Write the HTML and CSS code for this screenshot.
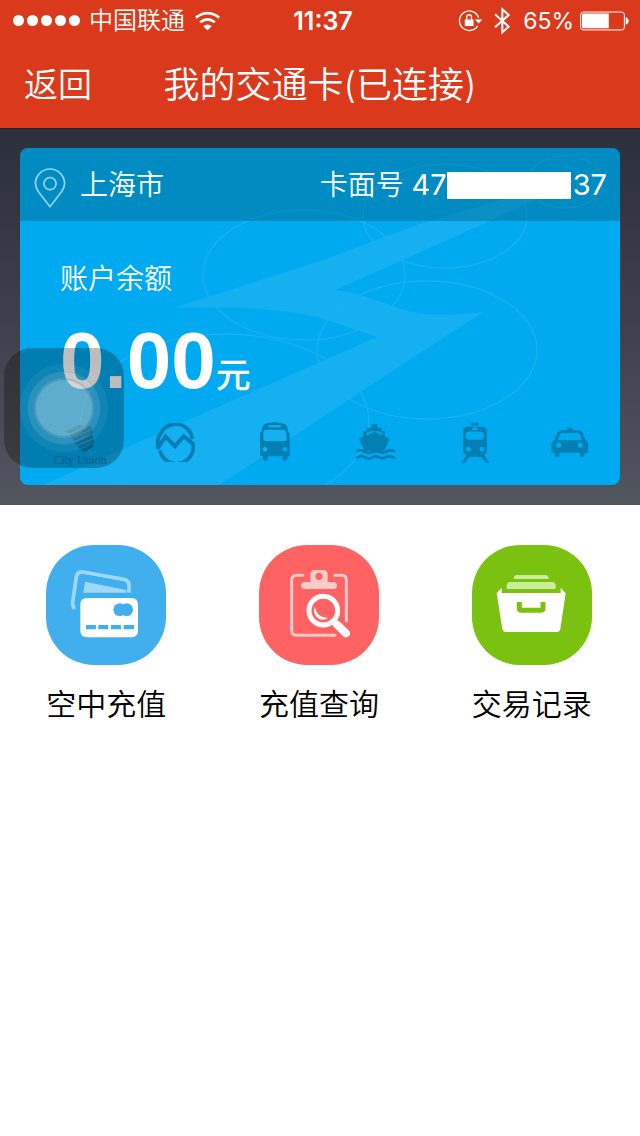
FILE: index.html
```html
<!DOCTYPE html>
<html lang="zh-CN">
<head>
<meta charset="utf-8">
<meta name="viewport" content="width=device-width, initial-scale=1">
<title>我的交通卡</title>
<link rel="stylesheet" href="styles.css">
</head>
<body>
<header class="top">
  <div class="status">
    <div class="status-left">
      <span class="signal"><i></i><i></i><i></i><i></i><i></i></span>
      <span>中国联通</span>
      <svg class="wifi" viewBox="580 30 80 60" aria-hidden="true">
        <g fill="none" stroke="#fff" stroke-width="8"><path d="M585 50Q620 23 655 50"/><path d="M598 64Q620 46 642 64"/></g>
        <path fill="#fff" d="M607 76Q620 65 633 76L620 88Z"/>
      </svg>
    </div>
    <time class="clock">11:37</time>
    <div class="status-right">
      <svg class="lock" viewBox="420 26 74 68" aria-hidden="true">
        <g fill="none" stroke="#fff"><path stroke-width="4" d="M478 76A29 29 0 1 1 481 52"/><path stroke-width="4" d="M446 58V50a7 7 0 0 1 14 0V58"/></g>
        <path fill="#fff" d="M440 57h26v19h-26zM470 57h22l-11 12z"/>
      </svg>
      <svg class="bluetooth" viewBox="524 20 54 84" aria-hidden="true"><path fill="none" stroke="#fff" stroke-width="6" d="M530 42L571 79L552 96V27L571 44L530 81"/></svg>
      <span class="percent">65%</span>
      <svg class="battery" viewBox="780 32 148 60" aria-hidden="true">
        <rect x="782" y="35" width="132" height="54" rx="8" fill="none" stroke="#fff" stroke-width="3"/>
        <path fill="#fff" d="M790 39H867V84H790Q786 84 786 80V43Q786 39 790 39ZM918 51Q927 54 927 62T918 73Z"/>
      </svg>
    </div>
  </div>
  <nav class="nav">
    <button class="back" type="button">返回</button>
    <h1 class="title">我的交通卡(已连接)</h1>
  </nav>
</header>
<main>
  <section class="stage">
    <article class="card">
      <svg class="pattern" viewBox="20 148 600 337" preserveAspectRatio="none" aria-hidden="true">
        <path fill="#14b0f2" d="M174 308L320 261L420 224L598 171L538 199L403 260L335 290C370 294 395 310 424 314Q450 316 484 312Q455 330 420 353L219 485H43L200 415L377 337L327 320Q275 304 174 308Z"/>
        <g fill="none" stroke="#19b1f1" stroke-width="1.3">
          <ellipse cx="304" cy="275" rx="101" ry="65"/><ellipse cx="445" cy="216" rx="82" ry="52"/>
          <ellipse cx="565" cy="182" rx="38" ry="26"/><ellipse cx="427" cy="350" rx="110" ry="69"/>
          <ellipse cx="225" cy="422" rx="144" ry="88"/>
        </g>
      </svg>
      <div class="card-head">
        <svg class="pin" viewBox="103 115 94 118" aria-hidden="true"><g fill="none" stroke="#8fd6f5" stroke-width="5"><path d="M150 229L116 185Q107 173 107 161A43 43 0 0 1 193 161Q193 173 184 185Z"/><circle cx="150" cy="161" r="18"/></g></svg>
        <span class="city">上海市</span>
        <span class="number">卡面号 <span class="digits">47<span class="mask"></span>37</span></span>
      </div>
      <div class="balance">
        <p class="balance-label">账户余额</p>
        <p class="amount"><strong>0.00</strong><span>元</span></p>
      </div>
      <div class="transport">
        <div class="union">
          <svg viewBox="186 316 90 86" aria-hidden="true"><path fill="currentColor" d="M187 339L230 318L242 323L201 344ZM201 347L262 321L270 328L207 355ZM208 359L269 331V343L214 367ZM216 371L270 348V358L221 378ZM224 381L272 361V371L230 390ZM233 393L272 374V384L241 401Z"/></svg>
          <span>City Union</span>
        </div>
        <svg class="metro" viewBox="465 311 120 117" aria-hidden="true"><g fill="none" stroke="currentColor"><path stroke-width="11" d="M475 387Q468 360 482 343A50 50 0 0 1 577 359M480 393A50 50 0 0 0 579 372"/><path stroke-width="12" d="M471 389L497 352L525 381L551 351L583 376"/></g></svg>
        <svg class="bus" viewBox="180 311 90 120" aria-hidden="true"><path fill="currentColor" fill-rule="evenodd" d="M184 342Q186 323 194 317Q224 307 255 317Q263 323 265 342L269 343V414H262V423Q254 434 247 423V414H204V423Q196 434 189 423V414H180V343ZM206 321Q204 324 206 327H242Q245 324 242 321ZM197 334Q191 334 190 342V362Q191 369 198 369H252Q259 369 260 362L258 341Q257 334 251 334ZM195 386a7 7 0 1 0 .1 0ZM255 386a7 7 0 1 0 .1 0Z"/></svg>
        <svg class="ship" viewBox="470 308 120 112" aria-hidden="true"><path fill="currentColor" fill-rule="evenodd" d="M517 309H534V319H547V330H557V345L571 353L557 386Q550 391 542 389L528 398L513 389Q502 393 494 386L478 353L491 347V330H501V319H517ZM510 330V334H502V342L526 332L549 342V334H541V330Z"/><g fill="none" stroke="currentColor" stroke-width="8"><path d="M471 390C484 385 490 387 497 392S514 397 523 390Q531 387 539 392C549 397 554 396 563 390Q574 385 588 391"/><path d="M471 411C484 402 490 404 497 409S514 414 523 407Q531 404 539 409C549 414 554 413 563 407Q574 403 588 412"/></g></svg>
        <svg class="tram" viewBox="124 301 86 122" aria-hidden="true"><path fill="currentColor" fill-rule="evenodd" d="M142 315H189Q201 317 201 329V386Q201 395 193 399L208 422H198L185 405H147L136 422H125L140 399Q130 395 130 386V329Q131 317 142 315ZM157 318V325H174V318ZM147 329Q138 331 138 340V346Q140 354 147 354H184Q192 352 192 345V338Q191 330 184 329ZM146 375a7 7 0 1 0 .1 0ZM186 375a7 7 0 1 0 .1 0Z"/><circle cx="158" cy="307" r="5" fill="currentColor"/><circle cx="171" cy="307" r="5" fill="currentColor"/><path fill="none" stroke="currentColor" stroke-width="3" d="M158 307H171"/></svg>
        <svg class="taxi" viewBox="395 314 114 94" aria-hidden="true"><path fill="currentColor" fill-rule="evenodd" d="M442 324Q444 315 451 315T460 324H477Q486 324 489 330L498 351L507 361V392H496V401Q489 411 482 401V392H420V401Q413 411 406 401V392H396V361L406 351L414 331Q417 324 425 324ZM428 332Q423 332 421 337L415 354H489L482 337Q480 332 475 332ZM418 361a8 8 0 1 0 .1 0ZM483 361a8 8 0 1 0 .1 0Z"/></svg>
      </div>
    </article>
    <button class="assist" type="button" aria-label="AssistiveTouch"><span class="ring-outer"><span class="ring-mid"><span class="ring-inner"></span></span></span></button>
  </section>
  <section class="actions">
    <button class="action" type="button">
      <svg class="tile blue" viewBox="48 45 360 360" aria-hidden="true">
        <path fill="none" stroke="#9fd8f7" stroke-width="11" d="M131 238V230Q126 225 129 210L139 141Q142 124 158 126L281 148Q298 151 297 168V188"/>
        <path fill="#9fd8f7" d="M165 155L289 180V188H160Z"/>
        <rect x="151" y="204" width="173" height="118" rx="18" fill="#fff"/>
        <g fill="#41aeee"><circle cx="269" cy="239" r="19"/><circle cx="290" cy="239" r="19"/><path d="M168 285h30v13h-30zM205 285h30v13h-30zM243 285h30v13h-30zM281 285h31v13h-31z"/></g>
      </svg>
      <span>空中充值</span>
    </button>
    <button class="action" type="button">
      <svg class="tile red" viewBox="54 45 360 360" aria-hidden="true">
        <path fill="none" stroke="#ffcaca" stroke-width="9" stroke-linecap="round" d="M186 136H166Q152 137 152 151V301Q152 316 166 316H282M282 136H302Q316 137 316 151V272"/>
        <path fill="#ffcaca" fill-rule="evenodd" d="M208 156V131Q210 121 221 120H247Q258 121 260 131V156H279Q288 158 288 167Q287 177 278 177H190Q181 176 180 167Q181 157 190 156ZM234 128a11 11 0 1 0 .1 0Z"/>
        <circle cx="247" cy="242" r="43" fill="none" stroke="#fff" stroke-width="15"/>
        <path fill="#fff" d="M221 230Q226 262 261 264Q244 275 229 263Q215 249 221 230Z"/>
        <path fill="none" stroke="#fff" stroke-width="24" stroke-linecap="round" d="M288 284L315 310"/><path stroke="#fff" stroke-width="10" d="M274 269L290 285"/>
      </svg>
      <span>充值查询</span>
    </button>
    <button class="action" type="button">
      <svg class="tile green" viewBox="58 45 360 360" aria-hidden="true">
        <path fill="#caed99" d="M183 147V144Q184 135 193 135H278Q287 136 288 144V147ZM162 177V164Q164 156 172 156H299Q308 157 309 164V177Z"/>
        <path fill="#fff" d="M147 173V189H324V173L339 190L323 297Q321 306 312 306H160Q151 306 149 297L132 190Z"/>
        <path fill="none" stroke="#7ac20f" stroke-width="15" d="M200 216V235Q200 241 207 241H264Q271 241 271 235V216"/>
      </svg>
      <span>交易记录</span>
    </button>
  </section>
</main>
</body>
</html>
```
FILE: styles.css
```css
* { box-sizing: border-box; }
body {
  margin: 0;
  min-height: 100vh;
  background: #fff;
  color: #000;
  font-family: "Inter", "Noto Sans CJK SC", sans-serif;
  font-weight: 350;
}
button {
  margin: 0;
  padding: 0;
  border: 0;
  background: none;
  color: inherit;
  font: inherit;
}
h1, p { margin: 0; font-weight: inherit; }
svg { display: block; flex: none; }

.top { background: #da3a1b; color: #fff; }
.status {
  display: grid;
  grid-template-columns: 1fr auto 1fr;
  align-items: center;
  height: 41px;
  padding: 0 11px 0 13px;
  font-size: 24px;
  line-height: 40px;
}
.status-left, .status-right { display: flex; align-items: center; }
.status-left { gap: 9px; }
.status-right { justify-content: flex-end; }
.signal { display: flex; gap: 3px; }
.signal i { width: 11px; height: 11px; border-radius: 50%; background: #fff; }
.wifi { width: 27px; height: 20px; }
.clock { padding-left: 4px; font-size: 25px; font-weight: 600; }
.lock { width: 25px; height: 23px; }
.bluetooth { width: 18px; height: 28px; margin: 0 12px 0 10px; }
.percent { font-size: 23px; font-weight: 400; margin-right: 6px; }
.battery { width: 49px; height: 20px; }

.nav {
  display: grid;
  grid-template-columns: 1fr auto 1fr;
  align-items: center;
  height: 87px;
  padding: 0 24px;
}
.back { justify-self: start; font-size: 34px; line-height: 48px; }
.title { font-size: 36px; line-height: 52px; }

.stage {
  position: relative;
  padding: 19px 20px 20px;
  border-top: 1px solid #1f2630;
  background: linear-gradient(#2b303c, #3e3f4b 50%, #52565f);
}
.card {
  position: relative;
  overflow: hidden;
  border-radius: 8px;
  background: #00aaf0;
  color: #fff;
}
.pattern { position: absolute; inset: 0; width: 100%; height: 100%; }
.card-head {
  position: relative;
  display: flex;
  align-items: center;
  height: 73px;
  padding: 0 13px 0 14px;
  background: rgba(0, 96, 128, 0.4);
  font-size: 28px;
  line-height: 40px;
}
.pin { width: 32px; height: 40px; margin-top: 6px; }
.city { margin-left: 14px; }
.number { margin-left: auto; white-space: nowrap; }
.digits { font-size: 29px; font-weight: 400; }
.mask {
  display: inline-block;
  width: 124px;
  height: 27px;
  margin-right: 2px;
  background: #fff;
  vertical-align: -4px;
}
.balance { position: relative; padding: 36px 40px 0; }
.balance-label { font-size: 28px; line-height: 44px; }
.amount { display: flex; align-items: baseline; padding-top: 20px; }
.amount strong { font: bold 80px/80px "Liberation Sans", sans-serif; }
.amount span { font-size: 35px; font-weight: 500; line-height: 40px; }
.transport {
  position: relative;
  display: grid;
  grid-template-columns: 102fr 105fr 96fr 105fr 90fr 38fr;
  align-items: center;
  height: 84px;
  padding: 0 31px 2px 33px;
  color: #047fb2;
}
.union {
  display: flex;
  flex-direction: column;
  align-items: center;
  gap: 1px;
  width: 54px;
  padding-top: 6px;
  font: 12px/12px "Liberation Serif", serif;
  white-space: nowrap;
}
.union svg { width: 30px; height: 29px; }
.metro { width: 40px; height: 39px; }
.bus { width: 30px; height: 40px; }
.ship { width: 40px; height: 37px; }
.tram { width: 29px; height: 41px; }
.taxi { width: 38px; height: 31px; }

.assist {
  position: absolute;
  left: 4px;
  bottom: 37px;
  display: grid;
  place-items: center;
  width: 120px;
  height: 120px;
  border-radius: 28px;
  background: rgba(0, 0, 0, 0.26);
}
.assist span { display: grid; place-items: center; border-radius: 50%; }
.ring-outer { width: 88px; height: 88px; background: rgba(255, 255, 255, 0.06); }
.ring-mid { width: 74px; height: 74px; border: 1px solid rgba(0, 80, 120, 0.15); background: rgba(255, 255, 255, 0.11); }
.ring-inner { width: 60px; height: 60px; border: 2px solid rgba(0, 80, 120, 0.2); background: rgba(255, 255, 255, 0.25); }

.actions {
  display: grid;
  grid-template-columns: repeat(3, 1fr);
  padding: 40px 2px 0 0;
}
.action {
  display: flex;
  flex-direction: column;
  align-items: center;
  gap: 17px;
  font-size: 30px;
  line-height: 44px;
}
.tile { width: 120px; height: 120px; border-radius: 48px; }
.blue { background: #41aeee; }
.red { background: #ff6263; }
.green { background: #7ac20f; }
```
